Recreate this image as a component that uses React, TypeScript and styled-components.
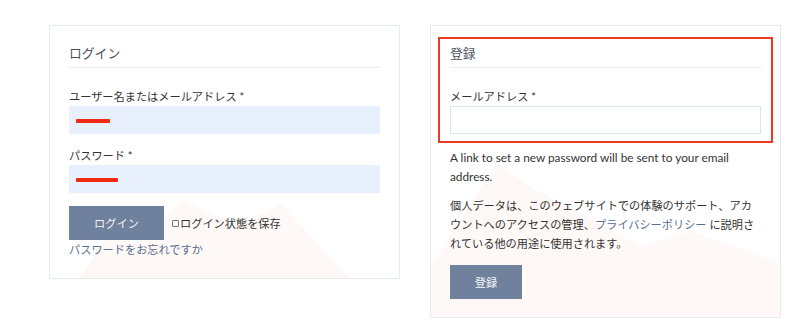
import React from "react";
import styled, { createGlobalStyle } from "styled-components";

const GlobalStyle = createGlobalStyle`
  body {
    margin: 0;
    background: #ffffff;
    font-family: Lato, "Noto Sans CJK JP", sans-serif;
    color: #333333;
  }
`;

const Mountains = (props: { variant: "login" | "register" }) => (
  <MountainLayer viewBox="0 0 350 170" preserveAspectRatio="none" aria-hidden>
    {props.variant === "login" ? (
      <polygon
        points="30,170 60,126 84,136 134,92 186,118 232,96 300,170"
        fill="#fef8f6"
      />
    ) : (
      <polygon
        points="0,120 66,16 100,40 150,66 210,100 260,84 350,116 350,170 0,170"
        fill="#fef8f6"
      />
    )}
  </MountainLayer>
);

const App = () => {
  return (
    <>
      <GlobalStyle />
      <Page>
        <Card>
          <Mountains variant="login" />
          <Title>ログイン</Title>
          <Field>
            <Label>ユーザー名またはメールアドレス *</Label>
            <InputWrap>
              <TextInput $filled type="text" />
              <Redact $width={34} />
            </InputWrap>
          </Field>
          <Field>
            <Label>パスワード *</Label>
            <InputWrap>
              <TextInput $filled type="password" />
              <Redact $width={42} />
            </InputWrap>
          </Field>
          <ButtonRow>
            <Button $width={95}>ログイン</Button>
            <Remember>
              <Check type="checkbox" />
              ログイン状態を保存
            </Remember>
          </ButtonRow>
          <Link href="#">パスワードをお忘れですか</Link>
        </Card>

        <Card $register>
          <Mountains variant="register" />
          <Highlight>
            <Title>登録</Title>
            <Field>
              <Label>メールアドレス *</Label>
              <TextInput type="email" />
            </Field>
          </Highlight>
          <Text $latin>A link to set a new password will be sent to your email address.</Text>
          <Text $gap>
            個人データは、このウェブサイトでの体験のサポート、アカウントへのアクセスの管理、
            <Link href="#">プライバシーポリシー</Link> に説明されている他の用途に使用されます。
          </Text>
          <Button $width={72} $top>
            登録
          </Button>
        </Card>
      </Page>
    </>
  );
};

export default App;

const Page = styled.div`
  display: flex;
  align-items: flex-start;
  gap: 30px;
  padding: 25px 0 0 49px;
`;

const Card = styled.div<{ $register?: boolean }>`
  position: relative;
  overflow: hidden;
  width: 311px;
  padding: ${(p) => (p.$register ? "11px 19px 18px" : "18px 19px 18px")};
  border: 1px solid #e7eaef;
  background: #ffffff;
  font-size: 11.2px;
  > *:not(svg) {
    position: relative;
  }
`;

const MountainLayer = styled.svg`
  position: absolute;
  left: 0;
  bottom: 0;
  width: 100%;
  height: 170px;
`;

const Highlight = styled.div`
  margin: 0 -12px;
  padding: 5px 10px 7px;
  border: 2px solid #ec3a25;
`;

const Title = styled.h2`
  margin: 0 0 20px;
  padding-bottom: 5px;
  border-bottom: 1px solid #e6e9ed;
  font-size: 12.8px;
  font-weight: normal;
  line-height: 18px;
  color: #4a5361;
`;

const Field = styled.div`
  margin-bottom: 13px;
  ${Highlight} & {
    margin-bottom: 0;
  }
`;

const Label = styled.label`
  display: block;
  line-height: 18px;
  color: #333333;
`;

const InputWrap = styled.div`
  position: relative;
`;

const TextInput = styled.input<{ $filled?: boolean }>`
  display: block;
  box-sizing: border-box;
  width: 100%;
  height: 28px;
  margin: 0;
  border: 1px solid ${(p) => (p.$filled ? "#e8f0fe" : "#dfe4ea")};
  background: ${(p) => (p.$filled ? "#e8f0fe" : "#ffffff")};
  outline: none;
`;

const Redact = styled.span<{ $width: number }>`
  position: absolute;
  left: 7px;
  top: 13px;
  width: ${(p) => p.$width}px;
  height: 4px;
  border-radius: 1px;
  background: #f02a12;
`;

const ButtonRow = styled.div`
  display: flex;
  align-items: center;
  gap: 8px;
`;

const Button = styled.button<{ $width: number; $top?: boolean }>`
  display: block;
  width: ${(p) => p.$width}px;
  height: 34px;
  margin-top: ${(p) => (p.$top ? "12px" : "0")};
  border: none;
  background: #6f819c;
  color: #f4f6f9;
  font-family: inherit;
  font-size: 11.2px;
  cursor: pointer;
`;

const Remember = styled.label`
  display: flex;
  align-items: center;
  color: #333333;
`;

const Check = styled.input`
  appearance: none;
  width: 7px;
  height: 7px;
  margin: 0 1px 0 0;
  border: 1px solid #777777;
  border-radius: 1px;
  background: #ffffff;
`;

const Link = styled.a`
  display: inline-block;
  line-height: 20px;
  color: #5a6e92;
  text-decoration: none;
`;

const Text = styled.p<{ $gap?: boolean; $latin?: boolean }>`
  margin: ${(p) => (p.$gap ? "10px 0 0" : "5px 0 0")};
  font-size: ${(p) => (p.$latin ? "11.8px" : "11.2px")};
  line-height: 19px;
  color: #333333;
  ${Link} {
    display: inline;
    line-height: inherit;
  }
`;
